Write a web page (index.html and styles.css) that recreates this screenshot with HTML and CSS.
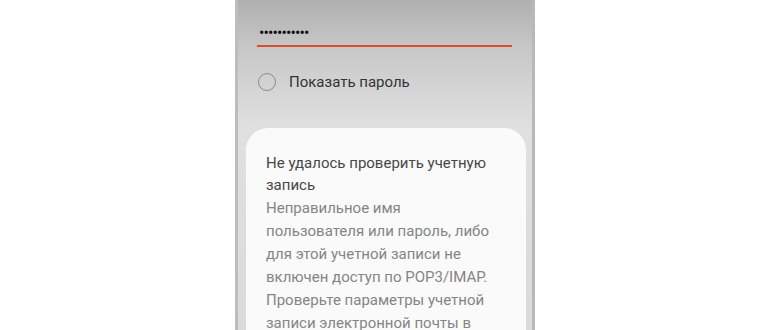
FILE: index.html
```html
<!DOCTYPE html>
<html lang="ru">

<head>
    <meta charset="UTF-8">
    <meta name="viewport" content="width=device-width, initial-scale=1.0">
    <title>Ошибка учетной записи</title>
    <link rel="stylesheet" href="styles.css">
</head>

<body>
    <div class="phone">
        <div class="screen">
            <div class="field">
                <div class="dots">•••••••••••</div>
            </div>
            <label class="check">
                <span class="radio"></span>
                <span class="check-text">Показать пароль</span>
            </label>
            <div class="dialog">
                <h3 class="dialog-title">Не удалось проверить учетную запись</h3>
                <p class="dialog-text">Неправильное имя пользователя или пароль, либо для этой учетной записи не включен доступ по POP3/IMAP. Проверьте параметры учетной записи электронной почты в</p>
            </div>
        </div>
    </div>
</body>

</html>
```

FILE: styles.css
```css
html,
body {
    margin: 0;
    padding: 0;
    background-color: #fff;
    font-family: Roboto, "Noto Sans", sans-serif;
}

.phone {
    width: 294px;
    height: 330px;
    margin-left: 235px;
    border-left: 3px solid #bdbdbd;
    border-right: 3px solid #b8b8b8;
    overflow: hidden;
}

.screen {
    height: 100%;
    padding-top: 20px;
    box-sizing: border-box;
    background: linear-gradient(to bottom, #afafaf 0, #c6c6c6 45px, #d8d8d8 100px, #e0e0e0 130px, #dadada 100%);
}

.field {
    margin: 0 20px 0 19px;
    padding-left: 2px;
    border-bottom: 2px solid #d4532c;
}

.dots {
    height: 25px;
    font-size: 16px;
    line-height: 26px;
    letter-spacing: -0.9px;
    color: #111;
}

.check {
    display: flex;
    align-items: center;
    gap: 13px;
    margin-top: 26px;
    padding-left: 20px;
}

.radio {
    width: 16px;
    height: 16px;
    border: 1.5px solid #8a8a8a;
    border-radius: 50%;
}

.check-text {
    font-size: 15px;
    color: #333;
}

.dialog {
    margin: 37px 6px 0 8px;
    padding: 24px 30px 0 20px;
    height: 300px;
    border-radius: 22px 22px 0 0;
    background-color: #fafafa;
}

.dialog-title {
    margin: 0;
    font-size: 15px;
    font-weight: 400;
    line-height: 22px;
    color: #474747;
}

.dialog-text {
    margin: 1px 0 0;
    font-size: 15px;
    line-height: 23px;
    color: #858585;
}
```
